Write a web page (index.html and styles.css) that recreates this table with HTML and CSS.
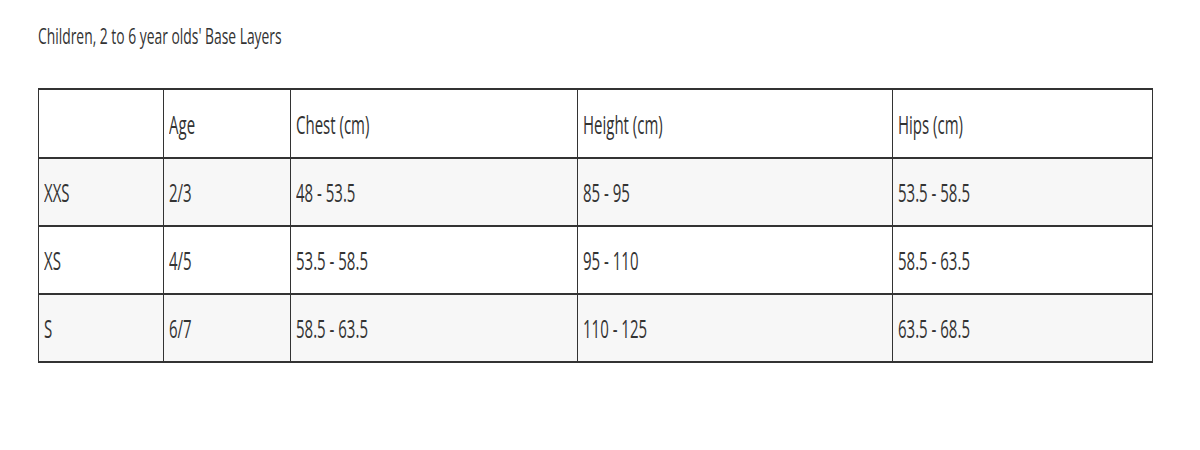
FILE: index.html
```html
<!DOCTYPE html>
<html lang="en">
<head>
<meta charset="utf-8">
<title>Size chart</title>
<link rel="stylesheet" href="styles.css">
</head>
<body>
<div class="page">
  <h2 class="title"><span class="sq">Children, 2 to 6 year olds' Base Layers</span></h2>
  <table class="chart">
    <colgroup>
      <col class="c1"><col class="c2"><col class="c3"><col class="c4"><col class="c5">
    </colgroup>
    <tr class="head">
      <td></td>
      <td><span class="sq">Age</span></td>
      <td><span class="sq">Chest (cm)</span></td>
      <td><span class="sq">Height (cm)</span></td>
      <td><span class="sq">Hips (cm)</span></td>
    </tr>
    <tr class="alt">
      <td><span class="sq">XXS</span></td>
      <td><span class="sq">2/3</span></td>
      <td><span class="sq">48 - 53.5</span></td>
      <td><span class="sq">85 - 95</span></td>
      <td><span class="sq">53.5 - 58.5</span></td>
    </tr>
    <tr>
      <td><span class="sq">XS</span></td>
      <td><span class="sq">4/5</span></td>
      <td><span class="sq">53.5 - 58.5</span></td>
      <td><span class="sq">95 - 110</span></td>
      <td><span class="sq">58.5 - 63.5</span></td>
    </tr>
    <tr class="alt">
      <td><span class="sq">S</span></td>
      <td><span class="sq">6/7</span></td>
      <td><span class="sq">58.5 - 63.5</span></td>
      <td><span class="sq">110 - 125</span></td>
      <td><span class="sq">63.5 - 68.5</span></td>
    </tr>
  </table>
</div>
</body>
</html>
```

FILE: styles.css
```css
html, body {
  margin: 0;
  padding: 0;
  background: #ffffff;
}
.page {
  padding: 17px 48px 0 38px;
  font-family: "Open Sans", "Liberation Sans", sans-serif;
  color: #333333;
}
.sq {
  display: inline-block;
  transform: scaleX(0.6);
  transform-origin: left center;
  white-space: nowrap;
}
.title {
  margin: 0 0 35px 0;
  font-size: 22px;
  font-weight: 400;
  line-height: 36px;
  height: 36px;
}
.title .sq {
  transform: scaleX(0.63);
}
.chart {
  width: 1114px;
  border-collapse: collapse;
  font-size: 25px;
  table-layout: fixed;
}
.c1 { width: 125px; }
.c2 { width: 127px; }
.c3 { width: 287px; }
.c4 { width: 315px; }
.c5 { width: 260px; }
.chart td {
  height: 64px;
  padding: 1px 5px 1px 5px;
  border-top: 2px solid #333333;
  border-bottom: 2px solid #333333;
  border-left: 1px solid #333333;
  border-right: 1px solid #333333;
  vertical-align: middle;
  line-height: 32px;
}
.chart .head td {
  height: 65px;
}
.chart .alt td {
  background: #f7f7f7;
}
```
